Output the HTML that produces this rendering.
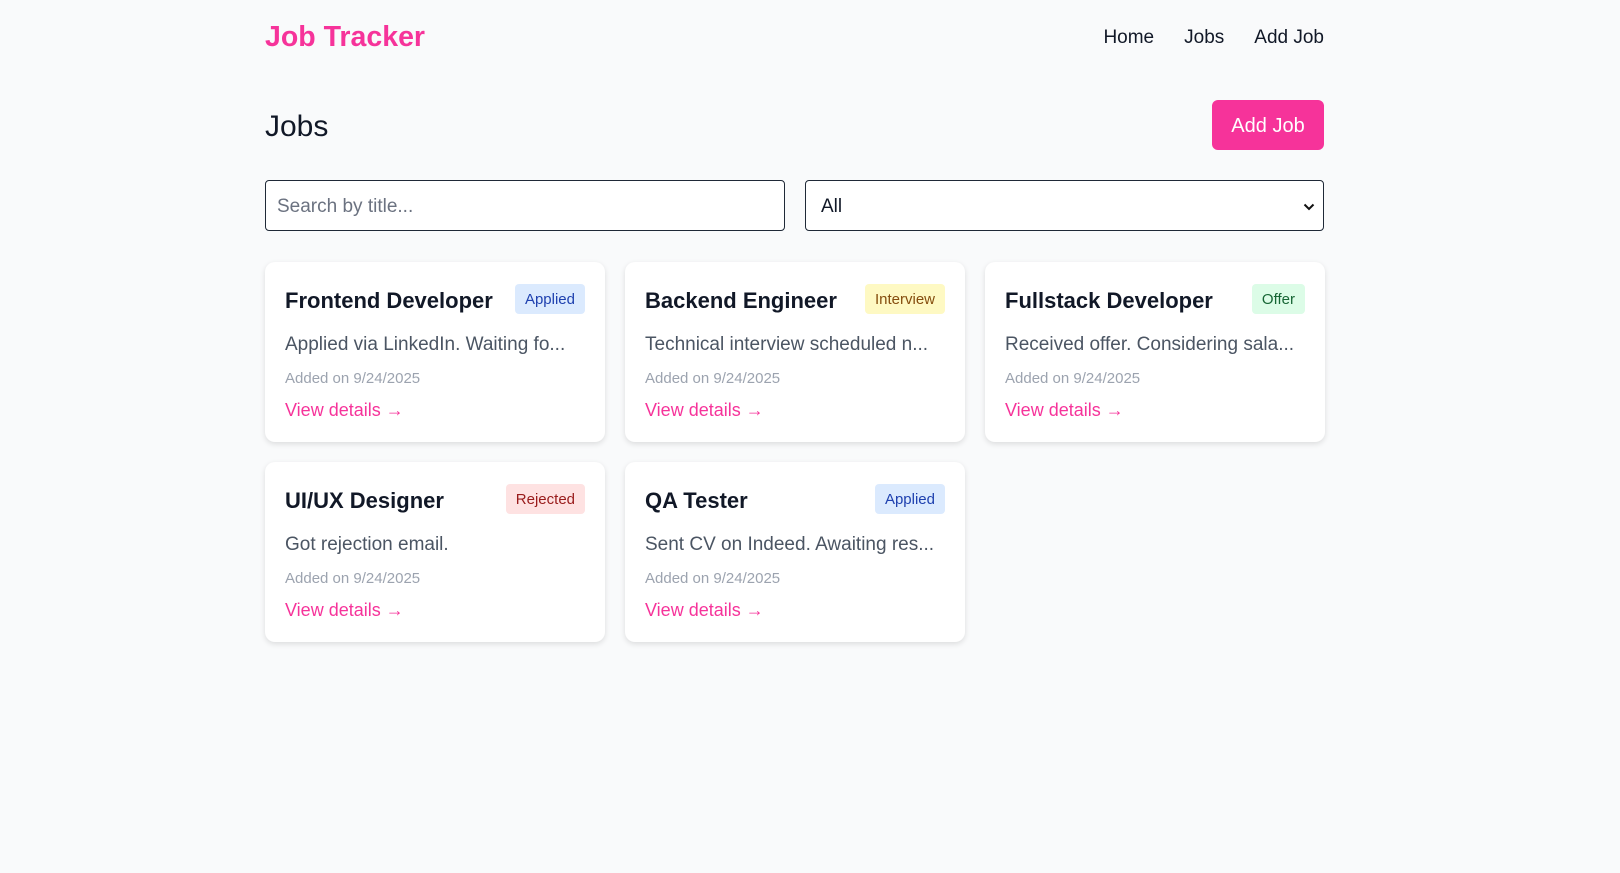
<!DOCTYPE html>
<html><head><meta charset="utf-8"><style>
*{box-sizing:border-box;margin:0;padding:0}
body{width:1620px;height:873px;background:#f9fafb;font-family:"Liberation Sans",sans-serif;color:#111827;position:relative;overflow:hidden}
.abs{position:absolute}
.logo{left:265px;top:19px;font-size:28.5px;font-weight:bold;color:#f6339a;line-height:36px}
.nav{right:296px;top:24px;font-size:19px;line-height:28px;display:flex;gap:30px;color:#111827}
h1{position:absolute;left:265px;top:109px;font-size:30px;font-weight:normal;line-height:36px;color:#111827}
.btn{left:1212px;top:100px;width:112px;height:50px;background:#f6339a;color:#fff;border-radius:6px;font-size:20px;display:flex;align-items:center;justify-content:center;padding-top:2px}
.inp{top:180px;height:51px;border:1.5px solid #1f2937;border-radius:4px;background:#fff;font-size:19px;display:flex;align-items:center;padding-top:3px}
.card{position:absolute;width:340px;height:180px;background:#fff;border-radius:10px;box-shadow:0 2px 6px rgba(0,0,0,.12);padding:0 20px}
.t{position:absolute;left:20px;top:25px;font-size:22px;font-weight:bold;line-height:28px;color:#111827}
.b{position:absolute;right:20px;top:22px;height:30px;padding:0 10px;border-radius:4px;font-size:15px;line-height:32px}
.d{position:absolute;left:20px;top:70px;font-size:19px;line-height:26px;color:#4b5563;white-space:nowrap}
.dt{position:absolute;left:20px;top:107px;font-size:15px;line-height:20px;color:#9ca3af}
.l{position:absolute;left:20px;top:136px;font-size:18px;line-height:24px;color:#f6339a}
.ap{background:#dbeafe;color:#1e40af}.iv{background:#fef9c3;color:#854d0e}.of{background:#dcfce7;color:#166534}.rj{background:#fee2e2;color:#991b1b}
</style></head><body>
<div class="abs logo">Job Tracker</div>
<div class="abs nav"><span>Home</span><span>Jobs</span><span>Add Job</span></div>
<h1>Jobs</h1>
<div class="abs btn">Add Job</div>
<div class="abs inp" style="left:265px;width:520px;padding-left:11px;color:#6b7280">Search by title...</div>
<div class="abs inp" style="left:805px;width:519px;padding-left:15px;color:#111827;justify-content:space-between;padding-right:8px">All<svg width="12" height="8" viewBox="0 0 12 8"><path d="M1.5 1.5L6 6l4.5-4.5" stroke="#111" stroke-width="2" fill="none"/></svg></div>

<div class="card" style="left:265px;top:262px"><div class="t">Frontend Developer</div><div class="b ap">Applied</div><div class="d">Applied via LinkedIn. Waiting fo...</div><div class="dt">Added on 9/24/2025</div><div class="l">View details →</div></div>
<div class="card" style="left:625px;top:262px"><div class="t">Backend Engineer</div><div class="b iv">Interview</div><div class="d">Technical interview scheduled n...</div><div class="dt">Added on 9/24/2025</div><div class="l">View details →</div></div>
<div class="card" style="left:985px;top:262px"><div class="t">Fullstack Developer</div><div class="b of">Offer</div><div class="d">Received offer. Considering sala...</div><div class="dt">Added on 9/24/2025</div><div class="l">View details →</div></div>
<div class="card" style="left:265px;top:462px"><div class="t">UI/UX Designer</div><div class="b rj">Rejected</div><div class="d">Got rejection email.</div><div class="dt">Added on 9/24/2025</div><div class="l">View details →</div></div>
<div class="card" style="left:625px;top:462px"><div class="t">QA Tester</div><div class="b ap">Applied</div><div class="d">Sent CV on Indeed. Awaiting res...</div><div class="dt">Added on 9/24/2025</div><div class="l">View details →</div></div>
</body></html>
